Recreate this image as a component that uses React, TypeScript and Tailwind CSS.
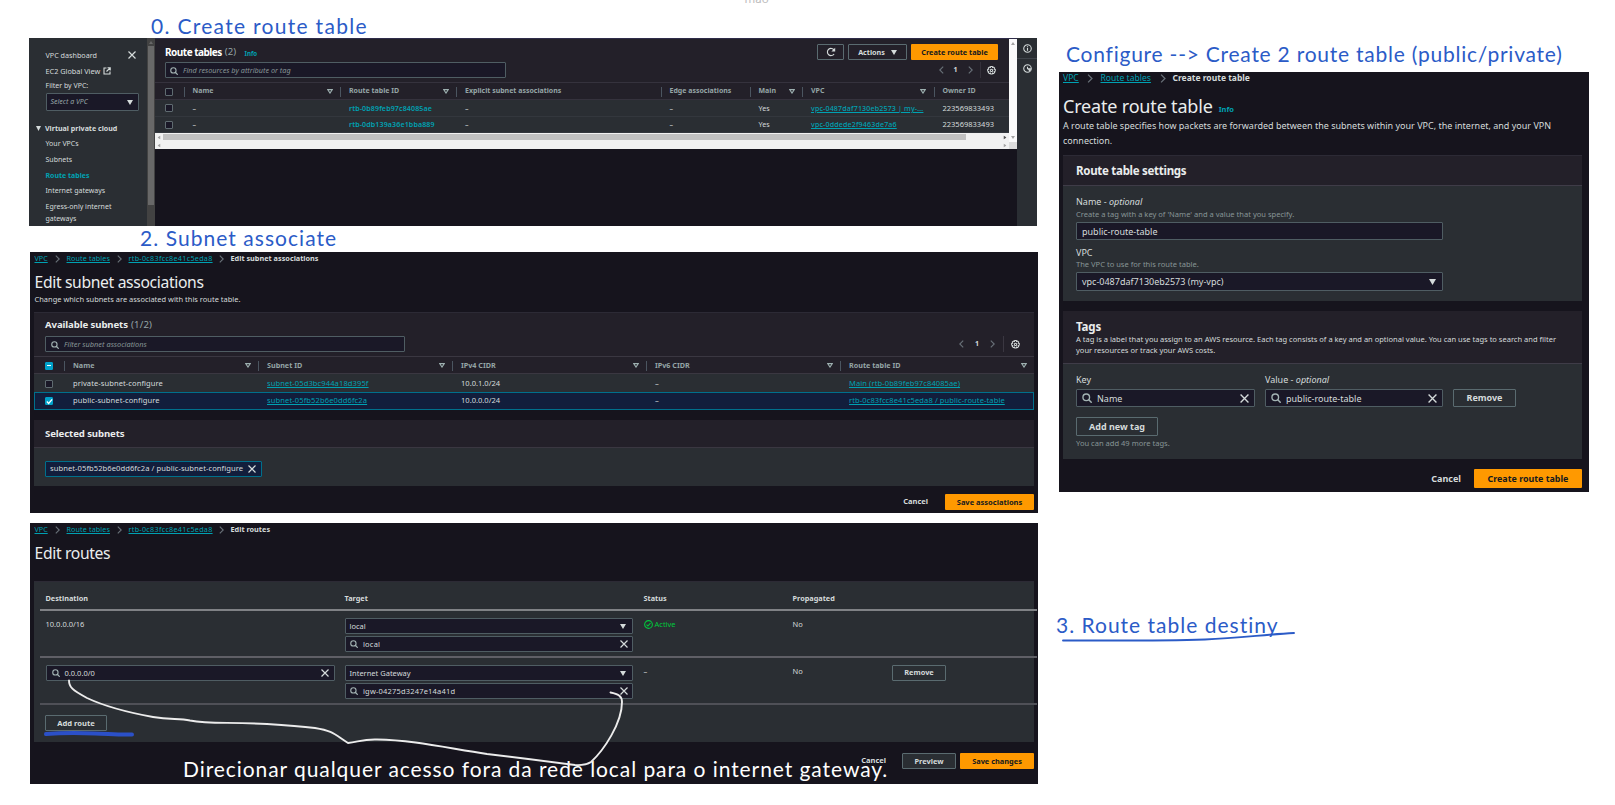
import React from "react";

type Kids = { children?: React.ReactNode; className?: string };

const Down = ({ className = "w-[7px] h-[6px] text-[#d5dbdb]" }: { className?: string }) => (
  <svg viewBox="0 0 10 8" preserveAspectRatio="none" className={"shrink-0 " + className}>
    <path d="M0 0h10L5 8z" fill="currentColor" />
  </svg>
);

const Sort = () => (
  <svg viewBox="0 0 12 10" className="h-[5px] w-[6px] shrink-0 text-[#9db0b0]">
    <path d="M1.300 1.200h9.400L6 8.200z" fill="none" stroke="currentColor" strokeWidth="2.200" />
  </svg>
);

const Close = ({ className = "w-2 h-2" }: { className?: string }) => (
  <svg viewBox="0 0 16 16" className={"shrink-0 text-[#d5dbdb] " + className}>
    <path d="M1 1l14 14M15 1L1 15" stroke="currentColor" strokeWidth="2.400" fill="none" />
  </svg>
);

const Search = ({ className = "w-2 h-2" }: { className?: string }) => (
  <svg viewBox="0 0 16 16" className={"shrink-0 text-[#a3b3b3] " + className}>
    <circle cx="6.800" cy="6.800" r="5.300" fill="none" stroke="currentColor" strokeWidth="2.200" />
    <path d="M10.500 10.500l5 5" stroke="currentColor" strokeWidth="2.400" />
  </svg>
);

const Chevron = ({ left = false, className = "w-[5px] h-2" }: { left?: boolean; className?: string }) => (
  <svg viewBox="0 0 8 14" className={"shrink-0 text-[#687078] " + className}>
    <path d={left ? "M7 1L1 7l6 6" : "M1 1l6 6-6 6"} fill="none" stroke="currentColor" strokeWidth="2" />
  </svg>
);

const Gear = () => (
  <svg viewBox="0 0 16 16" className="h-[9px] w-[9px] shrink-0 text-[#d5dbdb]">
    <path
      d="M6.600 1h2.800l.5 1.800 1.800-.9 2 2-.9 1.800 1.900.5v3l-1.900.5.9 1.800-2 2-1.800-.9-.5 1.800H6.600L6 12.600l-1.800.9-2-2 .9-1.800L1.200 9.200v-3l1.900-.5-.9-1.800 2-2 1.800.9z"
      fill="none"
      stroke="currentColor"
      strokeWidth="1.800"
    />
    <circle cx="8" cy="7.800" r="2.100" fill="none" stroke="currentColor" strokeWidth="1.800" />
  </svg>
);

const Btn = ({ children, className = "" }: Kids) => (
  <button className={"flex shrink-0 items-center justify-center rounded-[1px] border border-[#5a6b70] font-bold text-[#d5dbdb] " + className}>
    {children}
  </button>
);

const Primary = ({ children, className = "" }: Kids) => (
  <button className={"flex shrink-0 items-center justify-center rounded-[1px] bg-[#ff9900] font-bold text-[#16191f] " + className}>
    {children}
  </button>
);

const Field = ({ children, className = "" }: Kids) => (
  <div className={"flex shrink-0 items-center rounded-[1px] border border-[#4f5d63] bg-[#1a1827] text-[#d5dbdb] " + className}>
    {children}
  </div>
);

const Pager = ({ tight = false }: { tight?: boolean }) => (
  <div className="flex h-4 items-center text-[7px]">
    <Chevron left />
    <b className={tight ? "w-[24px] text-center" : "w-[26px] text-center"}>1</b>
    <Chevron />
    <span className={tight ? "ml-[7px] h-full w-px bg-[#34313b]" : "ml-[8px] h-full w-px bg-[#3a3741]"} />
    <span className={tight ? "w-[6px]" : "w-[7px]"} />
    <Gear />
  </div>
);

const Box = ({ state = "off" }: { state?: "off" | "on" | "mixed" }) => (
  <span
    className={
      "flex h-2 w-2 shrink-0 items-center justify-center rounded-[1px] border " +
      (state === "off" ? "border-[#5f6b70] bg-[#1a1827]" : "border-[#00a1c9] bg-[#00a1c9]")
    }
  >
    {state === "mixed" && <span className="h-px w-1 shrink-0 bg-white" />}
    {state === "on" && (
      <svg viewBox="0 0 8 8" className="h-[7px] w-[7px] shrink-0">
        <path d="M1 4l2 2.200L7 1.500" stroke="white" strokeWidth="1.500" fill="none" />
      </svg>
    )}
  </span>
);

const Crumbs = ({ last }: { last: string }) => (
  <nav className="flex h-[13px] items-center pl-[4.500px] text-[7.200px] text-[#00a1b2]">
    <span className="w-[20.500px] underline">VPC</span>
    <Chevron className="mr-[6.500px] h-2 w-[5px]" />
    <span className="w-[50px] whitespace-nowrap tracking-[0.015em] underline">Route tables</span>
    <Chevron className="mr-[7px] h-2 w-[5px]" />
    <span className="w-[90.500px] whitespace-nowrap tracking-[0.040em] underline">rtb-0c83fcc8e41c5eda8</span>
    <Chevron className="mr-[6.500px] h-2 w-[5px]" />
    <b className="text-[7.300px] text-[#d5dbdb]">{last}</b>
  </nav>
);

const Head = ({ label, sort = false }: { label: string; sort?: boolean }) => (
  <div className="flex items-center justify-between">
    <span className="flex h-[10px] items-center whitespace-nowrap border-l border-[#4b5560] pl-[8px]">{label}</span>
    {sort && (
      <span className="mr-[7.500px] flex">
        <Sort />
      </span>
    )}
  </div>
);

/* ---------- Route tables list ---------- */

const listCols = "grid grid-cols-[28.500px_156.500px_116px_204.500px_89px_52.500px_131.500px_75.500px]";

const RouteTables = () => (
  <section className="absolute left-[29px] top-[38px] flex h-[188px] w-[1008px] overflow-hidden bg-[#16141d] text-[7px] text-[#d5dbdb]">
    <aside className="h-full w-[118px] shrink-0 bg-[#2a2e33] pl-[16.500px] pt-[9px]">
      <div className="flex h-4 items-center justify-between pr-[11px]">
        <span className="text-[7.200px]">VPC dashboard</span>
        <Close />
      </div>
      <div className="flex h-4 items-center gap-[3px]">
        <span className="text-[7.300px]">EC2 Global View</span>
        <svg viewBox="0 0 16 16" className="h-2 w-2">
          <path d="M7 2H2v12h12V9M9 1.500h5.500V7M14 2L7 9" fill="none" stroke="currentColor" strokeWidth="2.200" />
        </svg>
      </div>
      <div className="flex h-[14px] items-center pt-px">Filter by VPC:</div>
      <Field className="h-[18px] w-[93px] justify-between pl-1 pr-[5px]">
        <i className="text-[#95a5a6]">Select a VPC</i>
        <Down className="h-[5px] w-[6px]" />
      </Field>
      <div className="-ml-[10px] mt-[9px] flex h-4 items-center font-bold">
        <Down className="mr-[4.500px] h-[5px] w-[5px]" />
        <span className="text-[7.100px]">Virtual private cloud</span>
      </div>
      <div className="flex h-4 items-center">Your VPCs</div>
      <div className="flex h-4 items-center">Subnets</div>
      <div className="flex h-[15.500px] items-center font-bold text-[#00a1b2]">Route tables</div>
      <div className="flex h-[15.500px] items-center">Internet gateways</div>
      <div className="mt-[2px] leading-[11.700px]">
        Egress-only internet
        <br />
        gateways
      </div>
    </aside>
    <div className="h-full w-2 shrink-0 bg-[#424242]">
      <div className="flex h-2 items-center justify-center">
        <Down className="h-[3px] w-1 rotate-180 text-[#686868]" />
      </div>
      <div className="ml-px h-[159px] w-[6px] bg-[#686868]" />
    </div>
    <div className="flex w-[862px] shrink-0 flex-col">
      <div className="flex h-[111px] border-t border-[#2f2c4a] bg-white">
        <div className="flex w-[854px] flex-col">
          <div className="flex h-[43px] shrink-0 justify-between bg-[#232029] pl-[10px] pr-[11px] pt-[5px]">
            <div>
              <div className="flex h-[17px] items-center">
                <b className="text-[10px] tracking-[-0.050em] text-white">Route tables</b>
                <span className="ml-[3px] text-[9.500px] text-[#95a5a6]">(2)</span>
                <b className="ml-[8.500px] mt-[2px] text-[6.200px] text-[#00a1b2]">Info</b>
              </div>
              <Field className="mt-px h-4 w-[341px] gap-[5px] px-1 pt-px">
                <Search />
                <i className="text-[7.300px] text-[#879596]">Find resources by attribute or tag</i>
              </Field>
            </div>
            <div className="flex flex-col items-end">
              <div className="flex gap-1">
                <Btn className="h-4 w-[27px]">
                  <svg viewBox="0 0 18 18" className="h-[10px] w-[10px]">
                    <path d="M14.500 12.500A6.500 6.500 0 1 1 14.500 5.500" fill="none" stroke="currentColor" strokeWidth="2" />
                    <path d="M16.500 1.500v6.800H9.700z" fill="currentColor" />
                  </svg>
                </Btn>
                <Btn className="h-4 w-[59px] gap-[6px] text-[7.200px]">
                  Actions
                  <Down className="h-[5px] w-[6px]" />
                </Btn>
                <Primary className="h-4 w-[87px] text-[7.300px]">Create route table</Primary>
              </div>
              <div className="mr-[2.500px] mt-[2px] flex">
                <Pager tight />
              </div>
            </div>
          </div>
          <div className={listCols + " h-[18px] shrink-0 border-y border-[#35323d] bg-[#232029] pt-px font-bold text-[#95a5a6]"}>
            <div className="flex items-center pl-[10px]">
              <Box />
            </div>
            <Head label="Name" sort />
            <Head label="Route table ID" sort />
            <Head label="Explicit subnet associations" />
            <Head label="Edge associations" />
            <Head label="Main" sort />
            <Head label="VPC" sort />
            <Head label="Owner ID" />
          </div>
          {[
            ["rtb-0b89feb97c84085ae", "vpc-0487daf7130eb2573 | my-..."],
            ["rtb-0db139a36e1bba889", "vpc-0ddede2f9463de7a6"],
          ].map(([rtb, vpc]) => (
            <div key={rtb} className={listCols + " h-[16.500px] shrink-0 items-center border-b border-[#33373d] bg-[#2a2e33] pt-px text-[7.100px]"}>
              <div className="pl-[10px]">
                <Box />
              </div>
              <span className="pl-[9px]">–</span>
              <span className="whitespace-nowrap pl-[9px] font-semibold tracking-[0.015em] text-[#00a1b2]">{rtb}</span>
              <span className="pl-[9px]">–</span>
              <span className="pl-[9px]">–</span>
              <span className="pl-[9px]">Yes</span>
              <span className="whitespace-nowrap pl-[9px] font-medium tracking-[0.020em] text-[#00a1b2] underline">{vpc}</span>
              <span className="pl-[9px] text-[7.500px]">223569833493</span>
            </div>
          ))}
          <div className="flex h-2 shrink-0 items-center bg-[#f1f1f1]">
            <Down className="mx-[2px] h-[3px] w-1 rotate-90 text-[#a3a3a3]" />
            <span className="h-[6px] w-[803px] bg-[#c1c1c1]" />
            <Down className="ml-auto mr-[2px] h-[3px] w-1 -rotate-90 text-[#505050]" />
          </div>
          <div className="flex h-2 shrink-0 items-center justify-between bg-[#f1f1f1] px-[2px]">
            <Down className="h-[3px] w-1 rotate-90 text-[#a3a3a3]" />
            <Down className="h-[3px] w-1 -rotate-90 text-[#a3a3a3]" />
          </div>
        </div>
        <div className="flex h-full w-2 flex-col items-center justify-between bg-[#fafafa] pt-[3px]">
          <Down className="h-[3px] w-1 rotate-180 text-[#a3a3a3]" />
          <div className="flex w-full flex-col items-center">
            <Down className="mb-[3px] h-[3px] w-1 text-[#a3a3a3]" />
            <span className="h-[7px] w-full bg-[#dcdcdc]" />
          </div>
        </div>
      </div>
    </div>
    <div className="flex h-full w-5 shrink-0 flex-col items-center bg-[#2a2e33]">
      <div className="flex h-[21px] w-full items-center justify-center border-b border-[#3f444b]">
        <svg viewBox="0 0 16 16" className="h-[9px] w-[9px]">
          <circle cx="8" cy="8" r="6.700" fill="none" stroke="currentColor" strokeWidth="1.900" />
          <path d="M8 7v5M8 3.800v2" stroke="currentColor" strokeWidth="2" />
        </svg>
      </div>
      <div className="flex h-[18px] items-center">
        <svg viewBox="0 0 16 16" className="h-[9px] w-[9px]">
          <circle cx="8" cy="8" r="6.700" fill="none" stroke="currentColor" strokeWidth="1.900" />
          <path d="M8 5v3.500h6" fill="none" stroke="currentColor" strokeWidth="1.900" />
          <path d="M8.500 9l6 .5-3 4z" fill="currentColor" />
        </svg>
      </div>
    </div>
  </section>
);

/* ---------- Edit subnet associations ---------- */

const subnetCols = "grid grid-cols-[30px_194px_194px_194px_194px_194px]";

const SubnetRow = ({ cells, on = false }: { cells: string[]; on?: boolean }) => (
  <div
    className={
      subnetCols +
      " h-[18px] items-center whitespace-nowrap text-[7.550px] " +
      (on ? "bg-[#121e3c] outline outline-[1px] -outline-offset-1 outline-[#00708c]" : "bg-[#2a2e33] pt-px")
    }
  >
    <span className="pl-[11px]">
      <Box state={on ? "on" : "off"} />
    </span>
    <span className="pl-[9px] tracking-[0.010em]">{cells[0]}</span>
    <span className="pl-[9px] tracking-[0.015em] text-[#00a1b2] underline">{cells[1]}</span>
    <span className="pl-[9px]">{cells[2]}</span>
    <span className="pl-[9px]">{cells[3]}</span>
    <span className="pl-[9px] tracking-[0.012em] text-[#00a1b2] underline">{cells[4]}</span>
  </div>
);

const SubnetAssociations = () => (
  <section className="absolute left-[30px] top-[252px] flex h-[261px] w-[1008px] flex-col overflow-hidden bg-[#16141d] text-[7px] text-[#d5dbdb]">
    <Crumbs last="Edit subnet associations" />
    <h1 className="mt-[6px] flex h-[22px] items-center pl-[4.500px] pt-[2px] text-[15.700px] tracking-[-0.022em] text-[#eaeded]">Edit subnet associations</h1>
    <p className="flex h-[13px] items-center pl-[4.500px] text-[7.480px]">Change which subnets are associated with this route table.</p>
    <div className="ml-[4px] mt-[6px] w-[1000px] shrink-0">
      <div className="flex h-[44px] items-end justify-between border-t border-[#2c2a35] bg-[#232029] pb-[4px] pl-[11px] pr-[14px]">
        <div>
          <div className="mb-[3px] flex h-[16px] items-center">
            <b className="text-[9.600px] tracking-[-0.010em] text-[#eaeded]">Available subnets</b>
            <span className="ml-[3px] text-[9.600px] tracking-[0.020em] text-[#95a5a6]">(1/2)</span>
          </div>
          <Field className="h-4 w-[360px] gap-[5px] px-[5px] pt-px">
            <Search />
            <i className="text-[7.400px] text-[#879596]">Filter subnet associations</i>
          </Field>
        </div>
        <Pager />
      </div>
      <div className={subnetCols + " h-[18px] border-y border-[#3a3741] bg-[#232029] pt-px text-[7.200px] font-bold text-[#95a5a6]"}>
        <div className="flex items-center pl-[11px]">
          <Box state="mixed" />
        </div>
        <Head label="Name" sort />
        <Head label="Subnet ID" sort />
        <Head label="IPv4 CIDR" sort />
        <Head label="IPv6 CIDR" sort />
        <Head label="Route table ID" sort />
      </div>
      <SubnetRow cells={["private-subnet-configure", "subnet-05d3bc944a18d395f", "10.0.1.0/24", "–", "Main (rtb-0b89feb97c84085ae)"]} />
      <SubnetRow on cells={["public-subnet-configure", "subnet-05fb52b6e0dd6fc2a", "10.0.0.0/24", "–", "rtb-0c83fcc8e41c5eda8 / public-route-table"]} />
    </div>
    <div className="ml-[4px] mt-[10px] w-[1000px] shrink-0 bg-[#2a2e33]">
      <div className="flex h-[28px] items-center border-b border-[#3a3741] bg-[#232029] pl-[11px] pt-px text-[9.600px] font-bold tracking-[-0.010em] text-[#eaeded]">
        Selected subnets
      </div>
      <div className="flex h-[38px] items-center pl-[11px] pt-[4px]">
        <div className="flex h-4 w-[217px] items-center justify-between whitespace-nowrap rounded-[1px] border border-[#00708c] bg-[#121e3c] pl-1 pr-[5px]">
          <span className="text-[7.600px] tracking-[0.008em]">subnet-05fb52b6e0dd6fc2a / public-subnet-configure</span>
          <Close />
        </div>
      </div>
    </div>
    <div className="mt-[8px] flex h-4 items-center justify-end pr-[4px]">
      <b className="mr-[17px] text-[7.500px]">Cancel</b>
      <Primary className="h-4 w-[89px] pt-px text-[7.500px]">Save associations</Primary>
    </div>
  </section>
);

/* ---------- Edit routes ---------- */

const routeCols = "grid grid-cols-[299px_299px_149px_99.500px_1fr] pl-[5.500px]";

const Target = ({ kind, id }: { kind: string; id: string }) => (
  <div className="flex w-[288px] flex-col gap-[2px]">
    <Field className="h-4 justify-between pl-1 pr-[6px]">
      <span className="pt-px">{kind}</span>
      <Down className="h-[5px] w-[6px]" />
    </Field>
    <Field className="h-4 pl-[4.500px] pr-1">
      <Search />
      <span className="ml-[5px] flex-1 pt-px tracking-[0.025em]">{id}</span>
      <Close />
    </Field>
  </div>
);

const EditRoutes = () => (
  <section className="absolute left-[30px] top-[523px] flex h-[261px] w-[1008px] flex-col bg-[#16141d] text-[7.500px] text-[#d5dbdb]">
    <Crumbs last="Edit routes" />
    <h1 className="mt-[6px] flex h-[22px] items-center pl-[4.500px] pt-[2px] text-[15.700px] tracking-[-0.022em] text-[#eaeded]">Edit routes</h1>
    <div className="ml-[4px] mt-[17px] h-[161px] w-[1000px] shrink-0 border-t border-[#2c2a35] bg-[#2a2e33] pl-[6px]">
      <div className="w-[997px]">
        <div className={routeCols + " h-[29px] items-end border-b-2 border-[#808286] pb-[5px] text-[7.300px] font-bold"}>
          <span>Destination</span>
          <span>Target</span>
          <span>Status</span>
          <span>Propagated</span>
        </div>
        <div className={routeCols + " h-[47px] items-start border-b-2 border-[#5f5f66] pt-[7px]"}>
          <span className="pt-px">10.0.0.0/16</span>
          <Target kind="local" id="local" />
          <span className="flex items-center gap-[2px] pt-px text-[#00c83c]">
            <svg viewBox="0 0 16 16" className="h-[9px] w-[9px]">
              <circle cx="8" cy="8" r="6.900" fill="none" stroke="currentColor" strokeWidth="1.900" />
              <path d="M4.500 8.200l2.500 2.500 4.500-5" fill="none" stroke="currentColor" strokeWidth="1.900" />
            </svg>
            Active
          </span>
          <span className="pt-px">No</span>
        </div>
        <div className={routeCols + " h-[47px] items-start border-b-2 border-[#4f5057] pt-[7px]"}>
          <Field className="h-4 w-[289px] pl-[5px] pr-[5px]">
            <Search />
            <span className="ml-[5px] flex-1 pt-px">0.0.0.0/0</span>
            <Close />
          </Field>
          <Target kind="Internet Gateway" id="igw-04275d3247e14a41d" />
          <span className="pt-px">–</span>
          <span className="pt-px">No</span>
          <Btn className="h-4 w-[54px] text-[7.400px]">Remove</Btn>
        </div>
      </div>
      <div className="flex pl-[5px] pt-[10px]">
        <Btn className="h-4 w-[62px] pt-px text-[7.600px]">Add route</Btn>
      </div>
    </div>
    <div className="mt-[11px] flex h-4 items-center justify-end pr-[4px] text-[7.400px]">
      <b className="mr-[16px] text-[7.500px]">Cancel</b>
      <Btn className="mr-[4px] h-4 w-[54px] bg-[#2a2e33] pt-px">Preview</Btn>
      <Primary className="h-4 w-[74px] pt-px">Save changes</Primary>
    </div>
  </section>
);

/* ---------- Create route table ---------- */

const CreateRouteTable = () => (
  <section className="absolute left-[1059px] top-[72px] flex h-[420px] w-[530px] flex-col overflow-hidden bg-[#16141d] text-[9px] text-[#d5dbdb]">
    <nav className="flex h-3 items-center whitespace-nowrap pl-[4px] pt-px text-[8.600px] text-[#00a1b2]">
      <span className="w-[24px] underline">VPC</span>
      <Chevron className="mr-[7.500px] h-[9px] w-[6px]" />
      <span className="w-[59px] underline">Route tables</span>
      <Chevron className="mr-[7px] h-[9px] w-[6px]" />
      <b className="text-[8.500px] text-[#d5dbdb]">Create route table</b>
    </nav>
    <h1 className="mt-[8px] flex h-[27px] items-center pl-[4px] pt-px text-[18px] tracking-[-0.010em] text-[#eaeded]">
      Create route table
      <b className="ml-[6px] mt-[7px] text-[7.500px] tracking-normal text-[#00a1b2]">Info</b>
    </h1>
    <p className="pl-[4px] leading-[14.500px]">
      A route table specifies how packets are forwarded between the subnets within your VPC, the internet, and your VPN
      <br />
      connection.
    </p>
    <div className="ml-[4px] mt-[7px] h-[146px] w-[519px] shrink-0 bg-[#2a2e33]">
      <div className="flex h-[31px] items-center border-b border-t border-b-[#3f3c48] border-t-[#2c2a35] bg-[#232029] pl-[13px] text-[11.500px] font-bold tracking-[-0.025em] text-[#eaeded]">
        Route table settings
      </div>
      <div className="pl-[13px] pt-[10px]">
        <div className="flex h-3 items-center whitespace-pre">
          Name - <i>optional</i>
        </div>
        <div className="flex h-3 items-center pt-px text-[7.550px] text-[#879596]">Create a tag with a key of 'Name' and a value that you specify.</div>
        <Field className="mt-[2px] h-[18px] w-[367px] px-[5px] pt-px">public-route-table</Field>
        <div className="mt-[7px] flex h-3 items-center">VPC</div>
        <div className="flex h-3 items-center text-[7.550px] text-[#879596]">The VPC to use for this route table.</div>
        <Field className="mt-px h-[19px] w-[367px] justify-between pl-[5px] pr-[6px]">
          vpc-0487daf7130eb2573 (my-vpc)
          <Down />
        </Field>
      </div>
    </div>
    <div className="ml-[4px] mt-[10px] h-[148px] w-[519px] shrink-0 bg-[#2a2e33]">
      <div className="flex h-[53px] flex-col border-b border-[#3f3c48] bg-[#232029] pl-[13px] pt-[8px]">
        <b className="flex h-[15px] items-center pt-px text-[11.500px] tracking-[-0.010em] text-[#eaeded]">Tags</b>
        <p className="text-[7.530px] leading-[10.500px]">
          A tag is a label that you assign to an AWS resource. Each tag consists of a key and an optional value. You can use tags to search and filter
          <br />
          your resources or track your AWS costs.
        </p>
      </div>
      <div className="pl-[13px] pt-[9px]">
        <div className="flex h-[13px] items-center whitespace-pre">
          <span className="w-[189px]">Key</span>
          Value - <i>optional</i>
        </div>
        <div className="mt-[3px] flex">
          <Field className="mr-[10px] h-[18px] w-[179px] px-[5px]">
            <Search className="h-[10px] w-[10px]" />
            <span className="ml-[5px] flex-1 pt-px">Name</span>
            <Close className="h-[9px] w-[9px]" />
          </Field>
          <Field className="mr-[10px] h-[18px] w-[178px] px-[5px]">
            <Search className="h-[10px] w-[10px]" />
            <span className="ml-[5px] flex-1 pt-px">public-route-table</span>
            <Close className="h-[9px] w-[9px]" />
          </Field>
          <Btn className="h-[18px] w-[63px]">Remove</Btn>
        </div>
        <Btn className="mt-[10px] h-[19px] w-[82px]">Add new tag</Btn>
        <div className="mt-[2px] flex h-3 items-center text-[7.550px] text-[#879596]">You can add 49 more tags.</div>
      </div>
    </div>
    <div className="mt-[10px] flex h-[19px] items-center justify-end pr-[7px]">
      <b className="mr-[13px]">Cancel</b>
      <Primary className="h-[19px] w-[108px] text-[8.900px]">Create route table</Primary>
    </div>
  </section>
);

const Note = ({ children, className = "" }: Kids) => (
  <div className={"absolute whitespace-nowrap font-['Lato',sans-serif] text-[21px] leading-6 " + className}>{children}</div>
);

export default function App() {
  return (
    <main className="relative h-[805px] w-[1615px] overflow-hidden bg-white font-['Noto_Sans',sans-serif]">
      <div className="absolute left-[744.500px] top-[-9px] text-[11.500px] leading-4 text-[#bdbdbd]">mão</div>
      <Note className="left-[151px] top-[14px] tracking-[1.300px] text-[#2b5bc7]">0. Create route table</Note>
      <Note className="left-[140px] top-[226px] tracking-[1.050px] text-[#2b5bc7]">2. Subnet associate</Note>
      <Note className="left-[1066px] top-[42px] tracking-[0.760px] text-[#2b5bc7]">Configure --&gt; Create 2 route table (public/private)</Note>
      <Note className="left-[1056px] top-[613px] tracking-[1px] text-[#2b5bc7]">3. Route table destiny</Note>
      <RouteTables />
      <SubnetAssociations />
      <EditRoutes />
      <CreateRouteTable />
      <Note className="left-[183px] top-[757px] tracking-[0.930px] text-white">Direcionar qualquer acesso fora da rede local para o internet gateway.</Note>
      <svg viewBox="0 0 1615 805" className="pointer-events-none absolute inset-0 h-full w-full" fill="none" strokeLinecap="round" strokeLinejoin="round">
        <path
          d="M69 680.500C69 687 72 690 87 698C104 706 131 713 153 717C171 720 179 718 190 720.500C209 724 225 722 267 724C284 725 299 726 315 728C333 731 334 734 348 743C358 742 363 739 377 739.500C413 740 447 748 487 754C513 757 551 762 575 765C584 765.500 588 764 591 762C604 750 622 723 622 702C622 696 618 694 610.500 692.500"
          stroke="#ececec"
          strokeWidth="1.900"
        />
        <path d="M46 734C60 733 80 733 95 733.500S121 735 132 734.500" stroke="#2b50c8" strokeWidth="4" />
        <path d="M1063 640.500C1110 640.500 1160 641 1205 639.500C1240 638 1265 634.500 1294 633" stroke="#2b5bc7" strokeWidth="1.900" />
      </svg>
    </main>
  );
}
